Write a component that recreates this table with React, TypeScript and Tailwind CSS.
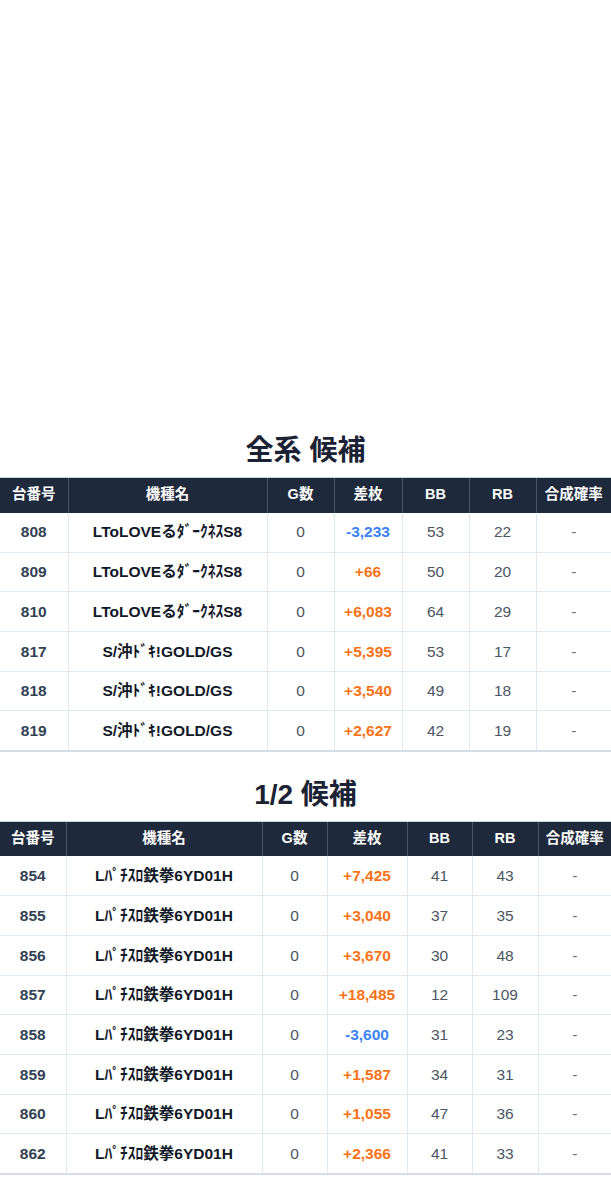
import React from 'react';

type Row = { no: string; name: string; g: string; diff: string; bb: string; rb: string };

const allRows: Row[] = [
  { no: '808', name: 'LToLOVEるﾀﾞｰｸﾈｽS8', g: '0', diff: '-3,233', bb: '53', rb: '22' },
  { no: '809', name: 'LToLOVEるﾀﾞｰｸﾈｽS8', g: '0', diff: '+66', bb: '50', rb: '20' },
  { no: '810', name: 'LToLOVEるﾀﾞｰｸﾈｽS8', g: '0', diff: '+6,083', bb: '64', rb: '29' },
  { no: '817', name: 'S/沖ﾄﾞｷ!GOLD/GS', g: '0', diff: '+5,395', bb: '53', rb: '17' },
  { no: '818', name: 'S/沖ﾄﾞｷ!GOLD/GS', g: '0', diff: '+3,540', bb: '49', rb: '18' },
  { no: '819', name: 'S/沖ﾄﾞｷ!GOLD/GS', g: '0', diff: '+2,627', bb: '42', rb: '19' },
];

const halfRows: Row[] = [
  { no: '854', name: 'Lﾊﾟﾁｽﾛ鉄拳6YD01H', g: '0', diff: '+7,425', bb: '41', rb: '43' },
  { no: '855', name: 'Lﾊﾟﾁｽﾛ鉄拳6YD01H', g: '0', diff: '+3,040', bb: '37', rb: '35' },
  { no: '856', name: 'Lﾊﾟﾁｽﾛ鉄拳6YD01H', g: '0', diff: '+3,670', bb: '30', rb: '48' },
  { no: '857', name: 'Lﾊﾟﾁｽﾛ鉄拳6YD01H', g: '0', diff: '+18,485', bb: '12', rb: '109' },
  { no: '858', name: 'Lﾊﾟﾁｽﾛ鉄拳6YD01H', g: '0', diff: '-3,600', bb: '31', rb: '23' },
  { no: '859', name: 'Lﾊﾟﾁｽﾛ鉄拳6YD01H', g: '0', diff: '+1,587', bb: '34', rb: '31' },
  { no: '860', name: 'Lﾊﾟﾁｽﾛ鉄拳6YD01H', g: '0', diff: '+1,055', bb: '47', rb: '36' },
  { no: '862', name: 'Lﾊﾟﾁｽﾛ鉄拳6YD01H', g: '0', diff: '+2,366', bb: '41', rb: '33' },
];

const headers = ['台番号', '機種名', 'G数', '差枚', 'BB', 'RB', '合成確率'];

function CandidateTable({ title, rows, widths }: { title: string; rows: Row[]; widths: number[] }) {
  return (
    <section>
      <h2 className="text-center text-[28px] font-bold leading-[39px] text-[#1a2233] mb-[7px]">{title}</h2>
      <table className="w-full table-fixed border-collapse text-center">
        <colgroup>
          {widths.map((w, i) => (
            <col key={i} style={{ width: w }} />
          ))}
        </colgroup>
        <thead>
          <tr className="h-[35px] bg-[#1e293b]">
            {headers.map((h, i) => (
              <th
                key={h}
                className={`p-0 text-[14.5px] font-bold text-white border-t border-[#cbd5e1] ${i > 0 ? 'border-l border-l-[#475569]' : ''}`}
              >
                {h}
              </th>
            ))}
          </tr>
        </thead>
        <tbody>
          {rows.map((r, idx) => (
            <tr
              key={r.no}
              className={`h-[39.7px] text-[15.5px] ${idx === rows.length - 1 ? 'border-b-2 border-[#d5dde8]' : 'border-b border-[#e2e8f0]'}`}
            >
              <td className="p-0 font-bold text-[#334155]">{r.no}</td>
              <td className="p-0 border-l border-[#e2e8f0] font-bold text-[#111827] whitespace-nowrap">{r.name}</td>
              <td className="p-0 border-l border-[#e2e8f0] text-[#4b5563]">{r.g}</td>
              <td
                className={`p-0 border-l border-[#e2e8f0] font-bold ${r.diff.startsWith('-') ? 'text-[#3b82f6]' : 'text-[#f97316]'}`}
              >
                {r.diff}
              </td>
              <td className="p-0 border-l border-[#e2e8f0] text-[#4b5563]">{r.bb}</td>
              <td className="p-0 border-l border-[#e2e8f0] text-[#4b5563]">{r.rb}</td>
              <td className="p-0 border-l border-[#e2e8f0] text-[#6b7280]">-</td>
            </tr>
          ))}
        </tbody>
      </table>
    </section>
  );
}

export default function App() {
  return (
    <div
      className="w-[611px] min-h-[1200px] bg-white"
      style={{ fontFamily: '"Liberation Sans", "Noto Sans CJK JP", sans-serif' }}
    >
      <div className="h-[431px]" />
      <CandidateTable title="全系 候補" rows={allRows} widths={[68, 199, 67, 68, 67, 67, 75]} />
      <div className="h-[23px]" />
      <CandidateTable title="1/2 候補" rows={halfRows} widths={[66, 196, 65, 80, 65, 66, 73]} />
    </div>
  );
}
